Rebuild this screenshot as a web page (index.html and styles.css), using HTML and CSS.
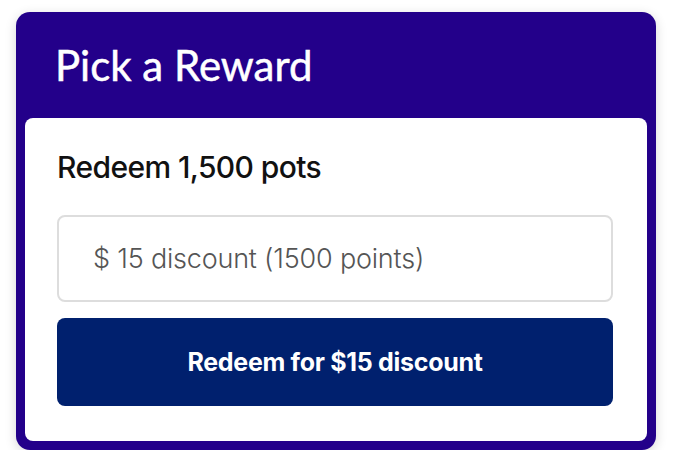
FILE: index.html
```html
<!DOCTYPE html>
<html lang="en">
<head>
    <meta charset="UTF-8">
    <meta name="viewport" content="width=device-width, initial-scale=1.0">
    <title>Pick a Reward</title>
    <link rel="stylesheet" href="styles.css">
</head>
<body>
    <div class="reward-card">
        <div class="reward-header">
            <h1>Pick a Reward</h1>
        </div>
        <div class="reward-body">
            <h2 class="redeem-title">Redeem 1,500 pots</h2>
            <div class="reward-select">$ 15 discount (1500 points)</div>
            <button class="redeem-btn">Redeem for $15 discount</button>
        </div>
    </div>
</body>
</html>
```

FILE: styles.css
```css
body {
    margin: 0;
    padding: 12px 0 0 16px;
    background: #ffffff;
    font-family: Inter, "Noto Sans", sans-serif;
}
.reward-card {
    width: 640px;
    box-sizing: border-box;
    background: #23008a;
    border-radius: 14px;
    padding: 0 9px 9px;
    box-shadow: 0 3px 12px rgba(0, 0, 0, 0.16);
}
.reward-header {
    height: 106px;
    display: flex;
    align-items: center;
    padding-left: 30px;
}
.reward-header h1 {
    margin: 0;
    font-family: Lato, sans-serif;
    font-weight: 400;
    font-size: 42px;
    color: #ffffff;
    -webkit-text-stroke: 0.5px #ffffff;
}
.reward-body {
    background: #ffffff;
    border-radius: 8px;
    padding: 32px 34px 35px 32px;
}
.redeem-title {
    margin: 0 0 31px;
    font-size: 30px;
    font-weight: 500;
    letter-spacing: -0.6px;
    color: #111111;
    line-height: 34px;
}
.reward-select {
    height: 87px;
    box-sizing: border-box;
    border: 2px solid #dddddd;
    border-radius: 8px;
    display: flex;
    align-items: center;
    padding-left: 34px;
    font-size: 27px;
    font-weight: 300;
    letter-spacing: -0.2px;
    color: #555555;
}
.redeem-btn {
    display: block;
    width: 100%;
    height: 88px;
    margin-top: 16px;
    border: none;
    border-radius: 8px;
    background: #00206e;
    color: #ffffff;
    font-family: Inter, "Noto Sans", sans-serif;
    font-size: 25px;
    font-weight: 700;
    letter-spacing: -0.3px;
    cursor: pointer;
}
```
